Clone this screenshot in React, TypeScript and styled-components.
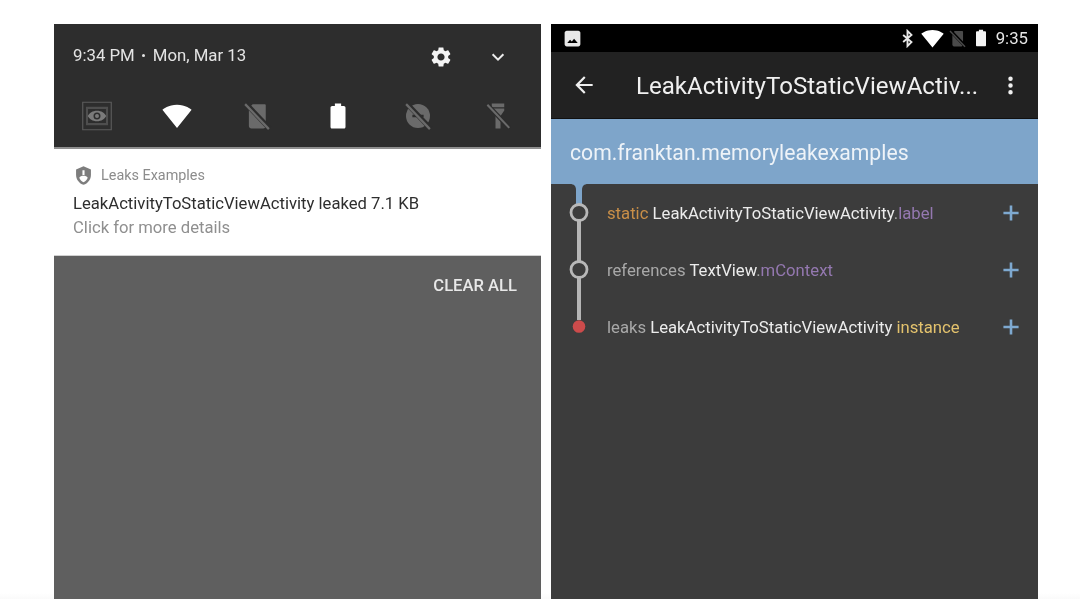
import React from "react";
import styled, { createGlobalStyle } from "styled-components";

const Global = createGlobalStyle`
  html, body { margin: 0; padding: 0; height: 100%; overflow: hidden; }
  body {
    font-family: Roboto, "Liberation Sans", sans-serif;
    background: linear-gradient(to bottom, #fff 593px, #fafafa 599px);
    -webkit-font-smoothing: antialiased;
  }
`;

const Page = styled.div`
  display: flex;
  gap: 10px;
  padding: 24px 0 0 54px;
  height: 599px;
  box-sizing: border-box;
`;

const Phone = styled.section`
  width: 487px;
  display: flex;
  flex-direction: column;
  background: #3c3c3c;
  overflow: hidden;
  filter: blur(0.4px);
`;

const ShadePanel = styled(Phone)`
  background: #5f5f5f;
`;

const Shade = styled.header`
  height: 123px;
  background: #2d2d2d;
  border-bottom: 2px solid #8f8f8f;
  box-sizing: content-box;
  display: flex;
  flex-direction: column;
`;

const ShadeTop = styled.div`
  height: 62px;
  display: flex;
  align-items: center;
  padding: 0 31px 0 19px;
`;

const DateText = styled.div`
  flex: 1;
  font-size: 16.8px;
  color: #e4e4e4;
`;

const Dot = styled.span`
  display: inline-block;
  width: 3.4px;
  height: 3.4px;
  border-radius: 50%;
  background: #e4e4e4;
  margin: 0 7.3px;
  vertical-align: 4px;
`;

const ShadeActions = styled.div`
  display: flex;
  align-items: center;
  gap: 33px;
  margin-top: 4px;
`;

const Tiles = styled.div`
  display: flex;
  justify-content: space-between;
  align-items: center;
  padding: 0 28px;
  height: 36px;
  margin-top: 12px;
`;

const Icon = styled.svg<{ $size: number; $color: string }>`
  display: block;
  flex: none;
  width: ${(p) => p.$size}px;
  height: ${(p) => p.$size}px;
  fill: ${(p) => p.$color};
`;

const Notification = styled.article`
  height: 107px;
  background: #fff;
  border-bottom: 1px solid #d0d0d0;
  box-sizing: border-box;
  padding: 16px 19px 0;
`;

const AppLine = styled.div`
  display: flex;
  align-items: center;
  gap: 7px;
  height: 20px;
  font-size: 14.4px;
  color: #8c8c8c;
`;

const NoteTitle = styled.div`
  font-size: 16.65px;
  line-height: 24px;
  margin-top: 7px;
  color: #2e2e2e;
`;

const NoteBody = styled.div`
  font-size: 16.65px;
  line-height: 24px;
  color: #8f8f8f;
`;

const ClearRow = styled.div`
  display: flex;
  justify-content: flex-end;
  padding: 20px 24px 0 0;
  font-size: 16.6px;
  line-height: 19px;
  font-weight: 500;
  color: #e8e8e8;
`;

const StatusBar = styled.div`
  height: 28px;
  background: #000;
  display: flex;
  align-items: center;
  padding: 0 10px 0 11px;
  color: #e6e6e6;
`;

const StatusIcons = styled.div`
  margin-left: auto;
  display: flex;
  align-items: center;
  gap: 4px;
`;

const Clock = styled.span`
  font-size: 16.8px;
  margin-left: 1px;
`;

const Toolbar = styled.div`
  height: 66px;
  background: #222;
  border-bottom: 1px solid #111;
  box-sizing: content-box;
  display: flex;
  align-items: center;
  padding: 0 14px 0 20px;
`;

const ToolbarTitle = styled.h1`
  margin: 2px 0 0 39px;
  flex: 1;
  font-size: 24.1px;
  font-weight: 400;
  color: #f0f0f0;
  white-space: nowrap;
  overflow: hidden;
`;

const PackageBar = styled.div`
  height: 65px;
  background: #7ea5ca;
  display: flex;
  align-items: center;
  padding: 2px 19px 0;
  box-sizing: border-box;
  font-size: 21.2px;
  color: #eef3f8;
`;

const Row = styled.div`
  height: 57px;
  display: flex;
  align-items: center;
  padding-right: 14px;
`;

const Gutter = styled.svg`
  display: block;
  flex: none;
  width: 56px;
  height: 57px;
`;

const RowText = styled.div`
  flex: 1;
  padding-top: 2px;
  font-size: 16.7px;
  color: #ececec;
  white-space: nowrap;
`;

const Part = styled.span<{ $color: string }>`
  color: ${(p) => p.$color};
`;

const WIFI = "M12 21.5 23.7 7C23.2 6.6 18.8 3 12 3S.8 6.6.3 7z";
const BATTERY =
  "M16.7 4h-2.200V2H9.500v2H7.300C6.600 4 6 4.600 6 5.300v15.400C6 21.400 6.600 22 7.300 22h9.400c.7 0 1.300-.6 1.300-1.300V5.300C18 4.600 17.400 4 16.700 4z";
const GEAR =
  "M19.14 12.94c.04-.3.06-.61.06-.94 0-.32-.02-.64-.07-.94l2.03-1.58c.18-.14.23-.41.12-.61l-1.92-3.32c-.12-.22-.37-.29-.59-.22l-2.39.96c-.5-.38-1.03-.7-1.62-.94l-.36-2.54c-.04-.24-.24-.41-.48-.41h-3.84c-.24 0-.43.17-.47.41l-.36 2.54c-.59.24-1.13.57-1.62.94l-2.39-.96c-.22-.08-.47 0-.59.22L2.74 8.87c-.12.21-.08.47.12.61l2.03 1.58c-.05.3-.09.63-.09.94s.02.64.07.94l-2.03 1.58c-.18.14-.23.41-.12.61l1.92 3.32c.12.22.37.29.59.22l2.39-.96c.5.38 1.03.7 1.62.94l.36 2.54c.05.24.24.41.48.41h3.84c.24 0 .44-.17.47-.41l.36-2.54c.59-.24 1.13-.56 1.62-.94l2.39.96c.22.08.47 0 .59-.22l1.92-3.32c.12-.22.07-.47-.12-.61l-2.01-1.58zM12 15.6c-1.98 0-3.6-1.62-3.6-3.6s1.62-3.6 3.6-3.6 3.6 1.62 3.6 3.6-1.62 3.6-3.6 3.6z";
const SIM = "M18 2.500H8.500L5.500 5.500V20c0 1.100.9 2 2 2H17c1.100 0 2-.9 2-2V3.500c0-.6-.4-1-1-1z";

type P = { size: number; color: string };

const Svg = ({ size, color, children }: P & { children: React.ReactNode }) => (
  <Icon $size={size} $color={color} viewBox="0 0 24 24">
    {children}
  </Icon>
);

const Slash = ({ bg, fg }: { bg: string; fg: string }) => (
  <>
    <path d="M3 2 22 22" stroke={bg} strokeWidth="4" fill="none" />
    <path d="M2.500 2.500 21.500 22.500" stroke={fg} strokeWidth="1.800" fill="none" />
  </>
);

const EyeTile = () => (
  <Svg size={30} color="#616161">
    <path fill="none" stroke="#5c5c5c" strokeWidth=".9" d="M.6 1h22.800v22H.6z" />
    <path fill="none" stroke="#6a6a6a" strokeWidth="1.700" d="M4 5.500h16v13H4z" opacity=".55" />
    <path
      d="M12 7.800c-3.400 0-6.200 1.800-7.400 4.200 1.200 2.400 4 4.200 7.400 4.200s6.200-1.800 7.400-4.200C18.200 9.600 15.400 7.800 12 7.800zm0 7a2.800 2.800 0 1 1 0-5.600 2.800 2.800 0 0 1 0 5.600zm0-4.400a1.600 1.600 0 1 0 0 3.200 1.600 1.600 0 0 0 0-3.200z"
      fill="#7a7a7a"
    />
  </Svg>
);

const SimOff = ({ size, color, bg }: P & { bg: string }) => (
  <Svg size={size} color={color}>
    <path d={SIM} />
    <Slash bg={bg} fg={color} />
  </Svg>
);

const DndOff = () => (
  <Svg size={30} color="#6a6a6a">
    <circle cx="12" cy="12" r="9.600" />
    <path d="M7.500 11h4v2h-4zM13 11h3.500v2H13z" fill="#2d2d2d" />
    <Slash bg="#2d2d2d" fg="#6a6a6a" />
  </Svg>
);

const FlashOff = () => (
  <Svg size={30} color="#6a6a6a">
    <path d="M7 2h10v3H7zM7 6h10v1.600l-3 4.400v10h-4V12L7 7.600z" />
    <path d="M3.500 3 21 21.500" stroke="#2d2d2d" strokeWidth="3.600" fill="none" />
    <path d="M3.500 3 21 21.500" stroke="#6a6a6a" strokeWidth="1.700" fill="none" />
  </Svg>
);

const Shield = () => (
  <Svg size={21} color="#7d7d7d">
    <path d="M12 1.500 3.500 5v6c0 5.400 3.600 10.200 8.500 11.500 4.900-1.300 8.500-6.100 8.500-11.500V5z" />
    <path
      d="M10.800 6h2.400v5.400h-2.400zM7.200 14.500c.9-1.700 2.700-2.200 4.800-2.200s3.900.5 4.800 2.200c-.9 2.500-2.600 4.300-4.800 5.200-2.200-.9-3.900-2.700-4.800-5.200z"
      fill="#fff"
    />
  </Svg>
);

const Chevron = () => (
  <Svg size={24} color="none">
    <path d="M6.600 9.300 12 14.700l5.400-5.400" stroke="#ececec" strokeWidth="2" fill="none" />
  </Svg>
);

const ImageNote = () => (
  <Svg size={21} color="#e8e8e8">
    <path d="M3 5.500C3 4.100 4.100 3 5.500 3h13C19.900 3 21 4.100 21 5.500v13c0 1.400-1.100 2.500-2.500 2.500h-13C4.100 21 3 19.900 3 18.500z" />
    <path d="M6 17l3.200-3.600 2 2.100 2.600-3.200L18 17z" fill="#000" />
  </Svg>
);

const Bluetooth = () => (
  <Svg size={19} color="none">
    <path
      d="M6.500 7.500 17 16.500 12 21.500V2.500L17 7.500 6.500 16.500"
      stroke="#e6e6e6"
      strokeWidth="2.400"
      fill="none"
    />
  </Svg>
);

const Back = () => (
  <Svg size={26} color="#f0f0f0">
    <path d="M20 11H7.830l5.590-5.590L12 4l-8 8 8 8 1.410-1.410L7.830 13H20z" />
  </Svg>
);

const Overflow = () => (
  <Svg size={27} color="#f0f0f0">
    <path d="M12 8a2 2 0 1 0 0-4 2 2 0 0 0 0 4zm0 2a2 2 0 1 0 0 4 2 2 0 0 0 0-4zm0 6a2 2 0 1 0 0 4 2 2 0 0 0 0-4z" />
  </Svg>
);

const Plus = () => (
  <Svg size={26} color="#7ea9d0">
    <path d="M19 13.200h-5.800V19h-2.400v-5.800H5v-2.400h5.800V5h2.400v5.800H19z" />
  </Svg>
);

type Kind = "first" | "middle" | "last";

const Marker = ({ kind }: { kind: Kind }) => (
  <Gutter viewBox="0 0 56 57">
    {kind === "first" && <path d="M19 0c4 0 6 2 6 6v15h6V6c0-4 2-6 6-6z" fill="#7ea5ca" />}
    {kind !== "first" && (
      <rect x="26" y="0" width="4" height={kind === "last" ? 22 : 20} fill="#b5b5b5" />
    )}
    {kind !== "last" && <rect x="26" y="36" width="4" height="21" fill="#b5b5b5" />}
    {kind === "last" ? (
      <circle cx="28" cy="28.500" r="6.300" fill="#cc4b4b" />
    ) : (
      <circle cx="28" cy="28.500" r="8" fill="#3c3c3c" stroke="#b8b8b8" strokeWidth="2.800" />
    )}
  </Gutter>
);

const GREY = "#a8a8a8";
const PURPLE = "#9478b0";
const ORANGE = "#c98f48";
const YELLOW = "#e3c26d";

export default function App() {
  return (
    <>
      <Global />
      <Page>
        <ShadePanel>
          <Shade>
            <ShadeTop>
              <DateText>
                9:34 PM<Dot />Mon, Mar 13
              </DateText>
              <ShadeActions>
                <Svg size={24} color="#f4f4f4">
                  <path d={GEAR} />
                </Svg>
                <Chevron />
              </ShadeActions>
            </ShadeTop>
            <Tiles>
              <EyeTile />
              <Svg size={30} color="#fff">
                <path d={WIFI} />
              </Svg>
              <SimOff size={30} color="#6a6a6a" bg="#2d2d2d" />
              <Svg size={30} color="#fff">
                <path d={BATTERY} />
              </Svg>
              <DndOff />
              <FlashOff />
            </Tiles>
          </Shade>
          <Notification>
            <AppLine>
              <Shield />
              <span>Leaks Examples</span>
            </AppLine>
            <NoteTitle>LeakActivityToStaticViewActivity leaked 7.1 KB</NoteTitle>
            <NoteBody>Click for more details</NoteBody>
          </Notification>
          <ClearRow>CLEAR ALL</ClearRow>
        </ShadePanel>

        <Phone>
          <StatusBar>
            <ImageNote />
            <StatusIcons>
              <Bluetooth />
              <Svg size={23} color="#fff">
                <path d={WIFI} />
              </Svg>
              <SimOff size={19} color="#4a4a4a" bg="#000" />
              <Svg size={20} color="#f4f4f4">
                <path d={BATTERY} />
              </Svg>
              <Clock>9:35</Clock>
            </StatusIcons>
          </StatusBar>
          <Toolbar>
            <Back />
            <ToolbarTitle>LeakActivityToStaticViewActiv...</ToolbarTitle>
            <Overflow />
          </Toolbar>
          <PackageBar>com.franktan.memoryleakexamples</PackageBar>
          <Row>
            <Marker kind="first" />
            <RowText>
              <Part $color={ORANGE}>static</Part> LeakActivityToStaticViewActivity
              <Part $color={GREY}>.</Part>
              <Part $color={PURPLE}>label</Part>
            </RowText>
            <Plus />
          </Row>
          <Row>
            <Marker kind="middle" />
            <RowText>
              <Part $color={GREY}>references</Part> TextView
              <Part $color={GREY}>.</Part>
              <Part $color={PURPLE}>mContext</Part>
            </RowText>
            <Plus />
          </Row>
          <Row>
            <Marker kind="last" />
            <RowText>
              <Part $color={GREY}>leaks</Part> LeakActivityToStaticViewActivity{" "}
              <Part $color={YELLOW}>instance</Part>
            </RowText>
            <Plus />
          </Row>
        </Phone>
      </Page>
    </>
  );
}
